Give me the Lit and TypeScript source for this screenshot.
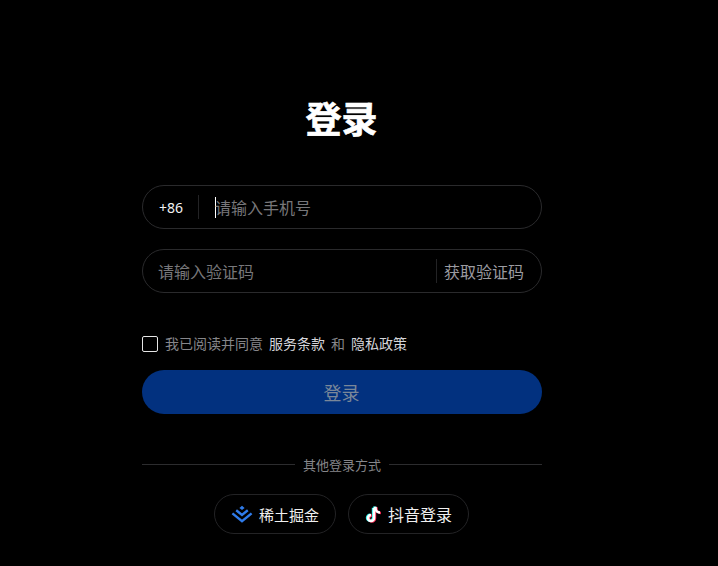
import { LitElement, html, css, svg } from "lit";
import { customElement } from "lit/decorators.js";

@customElement("app-root")
export class AppRoot extends LitElement {
  static styles = css`
    :host {
      display: block;
      width: 718px;
      height: 566px;
      background: #000;
      overflow: hidden;
      font-family: "Noto Sans CJK SC", "Liberation Sans", sans-serif;
      color: #fff;
    }
    .form {
      box-sizing: border-box;
      width: 400px;
      margin-left: 142px;
      padding-top: 91px;
      display: flex;
      flex-direction: column;
    }
    .title {
      height: 52px;
      line-height: 52px;
      margin: 0 0 42px;
      padding-right: 1px;
      text-align: center;
      font-size: 36px;
      font-weight: 700;
      -webkit-text-stroke: 0.6px #fff;
    }
    .field {
      box-sizing: border-box;
      height: 44px;
      border: 1px solid #2a2a2c;
      border-radius: 22px;
      display: flex;
      align-items: center;
      padding: 0 17px 0 16px;
      font-size: 16px;
      line-height: 22px;
    }
    .field + .field { margin-top: 20px; padding-left: 15px; }
    .code {
      font-family: "Noto Sans", "Liberation Sans", sans-serif;
      font-size: 14px;
      color: #f2f2f2;
      width: 39px;
      padding-top: 1px;
    }
    .sep { width: 1px; height: 24px; background: #232325; flex: none; }
    .caret { width: 1px; height: 21px; background: #fff; margin: 0 -1px 0 16px; flex: none; }
    .ph { color: #77777a; white-space: nowrap; }
    .grow { flex: 1; }
    .send { color: #9b9ba0; margin-left: 7px; white-space: nowrap; }
    .agree {
      display: flex;
      align-items: center;
      margin-top: 40px;
      height: 20px;
      font-size: 14px;
      color: #86868a;
      white-space: nowrap;
    }
    .box {
      box-sizing: border-box;
      width: 16px;
      height: 16px;
      border: 1px solid #e6e6e6;
      border-radius: 2px;
      margin: 2px 7px 0 0;
      flex: none;
    }
    .link { color: #d5d5da; }
    .gap { margin: 0 6px; }
    .submit {
      margin-top: 17px;
      height: 44px;
      border-radius: 22px;
      background: #02317f;
      color: #7a8799;
      font-size: 18px;
      display: flex;
      align-items: center;
      justify-content: center;
      padding-right: 1px;
    }
    .divider {
      margin-top: 40px;
      height: 20px;
      display: flex;
      align-items: center;
      gap: 8px;
      font-size: 13px;
      color: #86868a;
      white-space: nowrap;
    }
    .divider i { flex: 1; height: 1px; background: #2c2c2e; }
    .socials {
      margin-top: 20px;
      display: flex;
      justify-content: center;
      gap: 12px;
      padding-right: 1px;
    }
    .social {
      box-sizing: border-box;
      height: 40px;
      border: 1px solid #232325;
      border-radius: 20px;
      display: flex;
      align-items: center;
      gap: 5px;
      font-size: 16px;
      color: #f0f0f0;
      white-space: nowrap;
    }
    .juejin { padding: 0 16px 0 15px; font-size: 15px; }
    .douyin { padding: 0 16px 0 14px; }
    svg { display: block; flex: none; }
  `;

  private juejin() {
    return html`<svg width="24" height="18" viewBox="0 0 24 18">
      <path d="M12 0.8 L14.6 2.9 L12 5 L9.4 2.9 Z" fill="#2f7bea" />
      <path d="M6.2 5.2 L12 9.9 L17.8 5.2" fill="none" stroke="#2f7bea" stroke-width="2.4" />
      <path d="M2.4 8.4 L12 16.2 L21.6 8.4" fill="none" stroke="#2f7bea" stroke-width="2.4" />
    </svg>`;
  }

  private tiktok() {
    const d = "M11 4 V14 A3 3 0 1 1 8 11 M11 4 H12.5 A4.5 4.5 0 0 0 17 8.5";
    return html`<svg width="20" height="20" viewBox="0 0 20 20" fill="none" stroke-width="2.6">
      ${svg`<path d=${d} stroke="#25f4ee" transform="translate(-0.9 -0.3)" />
      <path d=${d} stroke="#fe2c55" transform="translate(0.9 0.5)" />
      <path d=${d} stroke="#ffffff" />`}
    </svg>`;
  }

  render() {
    return html`<div class="form">
      <h1 class="title">登录</h1>
      <div class="field">
        <span class="code">+86</span><span class="sep"></span><span class="caret"></span>
        <span class="ph">请输入手机号</span>
      </div>
      <div class="field">
        <span class="ph grow">请输入验证码</span><span class="sep"></span>
        <span class="send">获取验证码</span>
      </div>
      <div class="agree">
        <span class="box"></span><span>我已阅读并同意</span>
        <span class="link gap">服务条款</span><span>和</span>
        <span class="link gap">隐私政策</span>
      </div>
      <div class="submit">登录</div>
      <div class="divider"><i></i><span>其他登录方式</span><i></i></div>
      <div class="socials">
        <div class="social juejin">${this.juejin()}<span>稀土掘金</span></div>
        <div class="social douyin">${this.tiktok()}<span>抖音登录</span></div>
      </div>
    </div>`;
  }
}
